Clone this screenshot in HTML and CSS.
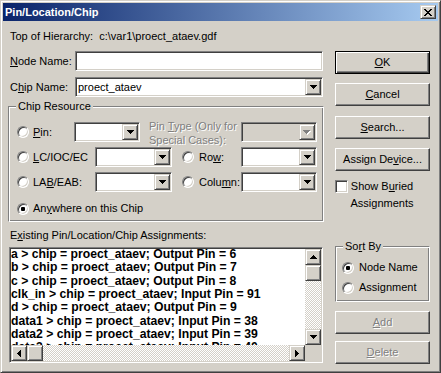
FILE: index.html
```html
<!DOCTYPE html>
<html lang="en">
  <head>
    <meta charset="UTF-8" />
    <title>Pin/Location/Chip</title>
    <link rel="stylesheet" href="styles.css">
  </head>
  <body>
    <div class="window">
      <div class="titlebar">
        <span class="title">Pin/Location/Chip</span>
        <span class="close">
          <svg width="8" height="7" viewBox="0 0 8 7"><path d="M0 0h2v1H0zM6 0h2v1H6zM1 1h2v1H1zM5 1h2v1H5zM2 2h4v1H2zM3 3h2v1H3zM2 4h4v1H2zM1 5h2v1H1zM5 5h2v1H5zM0 6h2v1H0zM6 6h2v1H6z"/></svg>
        </span>
      </div>

      <div class="client">
        <div class="main">
          <div class="hier">Top of Hierarchy:&nbsp; c:\var1\proect_ataev.gdf</div>

          <div class="field field-node">
            <span class="field-label"><u>N</u>ode Name:</span>
            <div class="edit"></div>
          </div>
          <div class="field field-chip">
            <span class="field-label">C<u>h</u>ip Name:</span>
            <div class="combo combo-chip">
              <span class="combo-text">proect_ataev</span>
              <span class="drop"><svg width="7" height="4" viewBox="0 0 7 4"><path d="M0 0h7v1H0zM1 1h5v1H1zM2 2h3v1H2zM3 3h1v1H3z"/></svg></span>
            </div>
          </div>

          <div class="group resource">
            <span class="legend">Chip Resource</span>

            <div class="res-row row-pin">
              <span class="opt opt-pin"><span class="radio"></span><span><u>P</u>in:</span></span>
              <div class="combo combo-pin"><span class="combo-text"></span><span class="drop"><svg width="7" height="4" viewBox="0 0 7 4"><path d="M0 0h7v1H0zM1 1h5v1H1zM2 2h3v1H2zM3 3h1v1H3z"/></svg></span></div>
              <span class="pintype disabled">Pin <u>T</u>ype (Only for<br>Special Cases):</span>
              <div class="combo combo-right off"><span class="combo-text"></span><span class="drop"><svg width="8" height="5" viewBox="0 0 8 5"><path fill="#fff" d="M1 1h7v1H1zM2 2h5v1H2zM3 3h3v1H3zM4 4h1v1H4z"/><path fill="#808080" d="M0 0h7v1H0zM1 1h5v1H1zM2 2h3v1H2zM3 3h1v1H3z"/></svg></span></div>
            </div>

            <div class="res-row">
              <span class="opt opt-left"><span class="radio"></span><span><u>L</u>C/IOC/EC</span></span>
              <div class="combo combo-mid"><span class="combo-text"></span><span class="drop"><svg width="7" height="4" viewBox="0 0 7 4"><path d="M0 0h7v1H0zM1 1h5v1H1zM2 2h3v1H2zM3 3h1v1H3z"/></svg></span></div>
              <span class="opt opt-right"><span class="radio"></span><span>Ro<u>w</u>:</span></span>
              <div class="combo combo-right"><span class="combo-text"></span><span class="drop"><svg width="7" height="4" viewBox="0 0 7 4"><path d="M0 0h7v1H0zM1 1h5v1H1zM2 2h3v1H2zM3 3h1v1H3z"/></svg></span></div>
            </div>

            <div class="res-row">
              <span class="opt opt-left"><span class="radio"></span><span>LA<u>B</u>/EAB:</span></span>
              <div class="combo combo-mid"><span class="combo-text"></span><span class="drop"><svg width="7" height="4" viewBox="0 0 7 4"><path d="M0 0h7v1H0zM1 1h5v1H1zM2 2h3v1H2zM3 3h1v1H3z"/></svg></span></div>
              <span class="opt opt-right"><span class="radio"></span><span>Colu<u>m</u>n:</span></span>
              <div class="combo combo-right"><span class="combo-text"></span><span class="drop"><svg width="7" height="4" viewBox="0 0 7 4"><path d="M0 0h7v1H0zM1 1h5v1H1zM2 2h3v1H2zM3 3h1v1H3z"/></svg></span></div>
            </div>

            <div class="res-row row-any">
              <span class="opt"><span class="radio on"></span><span>An<u>y</u>where on this Chip</span></span>
            </div>
          </div>

          <div class="list-label">E<u>x</u>isting Pin/Location/Chip Assignments:</div>

          <div class="listbox">
            <div class="lines">
              <div>a &gt; chip = proect_ataev; Output Pin = 6</div>
              <div>b &gt; chip = proect_ataev; Output Pin = 7</div>
              <div>c &gt; chip = proect_ataev; Output Pin = 8</div>
              <div>clk_in &gt; chip = proect_ataev; Input Pin = 91</div>
              <div>d &gt; chip = proect_ataev; Output Pin = 9</div>
              <div>data1 &gt; chip = proect_ataev; Input Pin = 38</div>
              <div>data2 &gt; chip = proect_ataev; Input Pin = 39</div>
              <div>data3 &gt; chip = proect_ataev; Input Pin = 40</div>
            </div>
            <div class="vscroll">
              <span class="sbtn"><svg width="7" height="4" viewBox="0 0 7 4"><path d="M3 0h1v1H3zM2 1h3v1H2zM1 2h5v1H1zM0 3h7v1H0z"/></svg></span>
              <span class="sbtn"></span>
              <span class="track"></span>
              <span class="sbtn"><svg width="7" height="4" viewBox="0 0 7 4"><path d="M0 0h7v1H0zM1 1h5v1H1zM2 2h3v1H2zM3 3h1v1H3z"/></svg></span>
            </div>
            <div class="hscroll">
              <span class="sbtn"><svg width="4" height="7" viewBox="0 0 4 7"><path d="M3 0h1v7H3zM2 1h1v5H2zM1 2h1v3H1zM0 3h1v1H0z"/></svg></span>
              <span class="sbtn"></span>
              <span class="track"></span>
              <span class="sbtn"><svg width="4" height="7" viewBox="0 0 4 7"><path d="M0 0h1v7H0zM1 1h1v5H1zM2 2h1v3H2zM3 3h1v1H3z"/></svg></span>
            </div>
            <div class="corner"></div>
          </div>
        </div>

        <div class="side">
          <div class="btn default"><span><u>O</u>K</span></div>
          <div class="btn btn-cancel"><span><u>C</u>ancel</span></div>
          <div class="btn btn-search"><span><u>S</u>earch...</span></div>
          <div class="btn btn-assign"><span>Assign De<u>v</u>ice...</span></div>

          <div class="buried">
            <span class="check"></span>
            <span class="buried-text">Show B<u>u</u>ried<br>Assignments</span>
          </div>

          <div class="group sort">
            <span class="legend">So<u>r</u>t By</span>
            <div class="sort-row"><span class="radio on"></span><span>Node Name</span></div>
            <div class="sort-row"><span class="radio"></span><span>Assignment</span></div>
          </div>

          <div class="btn disabled btn-add"><span><u>A</u>dd</span></div>
          <div class="btn disabled btn-delete"><span><u>D</u>elete</span></div>
        </div>
      </div>
    </div>
  </body>
</html>
```

FILE: styles.css
```css
* {
  box-sizing: border-box;
}
body {
  margin: 0;
  background: #d4d0c8;
  font-family: "Liberation Sans", Arial, sans-serif;
  font-size: 11px;
  line-height: 13px;
  color: #000;
}
.window {
  width: 441px;
  height: 373px;
  background: #d4d0c8;
  border: 1px solid;
  border-color: #d4d0c8 #404040 #404040 #d4d0c8;
  box-shadow: inset 1px 1px #fff, inset -1px -1px #808080;
  padding: 2px;
  display: flex;
  flex-direction: column;
}
.titlebar {
  height: 18px;
  flex: none;
  background: linear-gradient(to right, #0a246a, #a6caf0);
  display: flex;
  align-items: center;
  justify-content: space-between;
  padding: 0 2px;
}
.title {
  color: #fff;
  font-weight: 700;
}
.close {
  width: 16px;
  height: 14px;
  display: flex;
  align-items: center;
  justify-content: center;
}

/* bevels */
.close,
.drop,
.sbtn {
  background: #d4d0c8;
  border: 1px solid;
  border-color: #d4d0c8 #404040 #404040 #d4d0c8;
  box-shadow: inset 1px 1px #fff, inset -1px -1px #808080;
}
.edit,
.combo,
.listbox,
.check {
  background: #fff;
  border: 1px solid;
  border-color: #808080 #fff #fff #808080;
  box-shadow: inset 1px 1px #404040, inset -1px -1px #d4d0c8;
  padding: 1px;
}
.group {
  border: 1px solid;
  border-color: #808080 #fff #fff #808080;
  box-shadow: inset 1px 1px #fff, inset -1px -1px #808080;
  display: flex;
  flex-direction: column;
}
.legend {
  align-self: flex-start;
  margin-top: -7px;
  padding: 0 2px;
  background: #d4d0c8;
}
.disabled {
  color: #808080;
  text-shadow: 1px 1px 0 #fff;
}

.client {
  flex: 1;
  display: flex;
  padding-left: 5px;
}
.main {
  width: 316px;
  display: flex;
  flex-direction: column;
}
.side {
  width: 95px;
  margin-left: 11px;
  display: flex;
  flex-direction: column;
}

.hier {
  margin-top: 9px;
  padding-left: 2px;
}
.field {
  display: flex;
  align-items: center;
  height: 20px;
  padding-left: 2px;
}
.field-node {
  margin-top: 8px;
}
.field-chip {
  margin-top: 6px;
}
.field-label {
  width: 65px;
}
.edit {
  width: 248px;
  height: 20px;
}

.combo {
  height: 20px;
  display: flex;
  flex: none;
}
.combo-text {
  flex: 1;
  padding-left: 1px;
  line-height: 16px;
}
.combo.off {
  background: #d4d0c8;
}
.drop {
  width: 16px;
  height: 16px;
  display: flex;
  align-items: center;
  justify-content: center;
}
.combo-chip {
  width: 248px;
}
.combo-pin {
  width: 66px;
}
.combo-mid {
  width: 77px;
}
.combo-right {
  width: 76px;
}

.resource {
  margin-top: 9px;
  height: 116px;
  padding-left: 8px;
}
.resource .legend {
  margin-left: -1px;
}
.res-row {
  display: flex;
  align-items: center;
  height: 20px;
  margin-top: 5px;
}
.row-pin {
  margin-top: 9px;
}
.row-any {
  height: 13px;
  margin-top: 10px;
}
.opt {
  display: flex;
  align-items: center;
  gap: 4px;
  white-space: nowrap;
}
.opt-pin {
  width: 57px;
}
.opt-left {
  width: 78px;
}
.opt-right {
  width: 59px;
  margin-left: 10px;
  gap: 5px;
}
.pintype {
  width: 92px;
  margin-left: 9px;
  line-height: 14px;
  margin-top: 2px;
}

.radio {
  width: 12px;
  height: 12px;
  flex: none;
  border-radius: 50%;
  background: #fff;
  border: 1px solid;
  border-color: #808080 #fff #fff #808080;
  box-shadow: inset 1px 1px #404040, inset -1px -1px #d4d0c8;
  display: flex;
  align-items: center;
  justify-content: center;
}
.radio.on::after {
  content: "";
  width: 4px;
  height: 4px;
  border-radius: 1px;
  background: #000;
}

.list-label {
  margin-top: 7px;
  padding-left: 2px;
}
.listbox {
  margin-top: 5px;
  margin-left: 1px;
  width: 314px;
  height: 116px;
  display: grid;
  grid-template-columns: 1fr 16px;
  grid-template-rows: 1fr 16px;
}
.lines {
  overflow: hidden;
  font-size: 12.2px;
  font-weight: 700;
  line-height: 13.33px;
  white-space: nowrap;
}
.lines div:first-child {
  margin-top: -1px;
}
.vscroll,
.hscroll {
  display: flex;
  background: repeating-conic-gradient(#d4d0c8 0% 25%, #fff 0% 50%) 0 0 / 2px 2px;
}
.vscroll {
  flex-direction: column;
}
.sbtn {
  width: 16px;
  height: 16px;
  flex: none;
  display: flex;
  align-items: center;
  justify-content: center;
}
.track {
  flex: 1;
}
.corner {
  background: #d4d0c8;
}

.btn {
  height: 23px;
  display: flex;
  align-items: center;
  justify-content: center;
  background: #d4d0c8;
  border: 1px solid;
  border-color: #fff #404040 #404040 #fff;
  box-shadow: inset -1px -1px #808080, inset 1px 1px #d4d0c8;
}
.btn.default {
  margin-top: 30px;
  border-color: #000;
  box-shadow: inset 1px 1px #fff, inset -1px -1px #404040, inset -2px -2px #808080;
}
.btn-cancel {
  margin-top: 9px;
}
.btn-search {
  margin-top: 10px;
}
.btn-assign {
  margin-top: 9px;
}
.btn-add {
  margin-top: 9px;
}
.btn-delete {
  margin-top: 7px;
}

.buried {
  margin-top: 9px;
  display: flex;
}
.check {
  width: 13px;
  height: 13px;
  flex: none;
}
.buried-text {
  width: 68px;
  text-align: center;
  line-height: 17px;
  margin-top: -2px;
}

.sort {
  margin-top: 34px;
  height: 56px;
  padding-left: 6px;
}
.sort .legend {
  margin-left: 1px;
}
.sort-row {
  display: flex;
  align-items: center;
  gap: 5px;
  height: 13px;
  margin-top: 8px;
}
.sort-row + .sort-row {
  margin-top: 7px;
}
```
